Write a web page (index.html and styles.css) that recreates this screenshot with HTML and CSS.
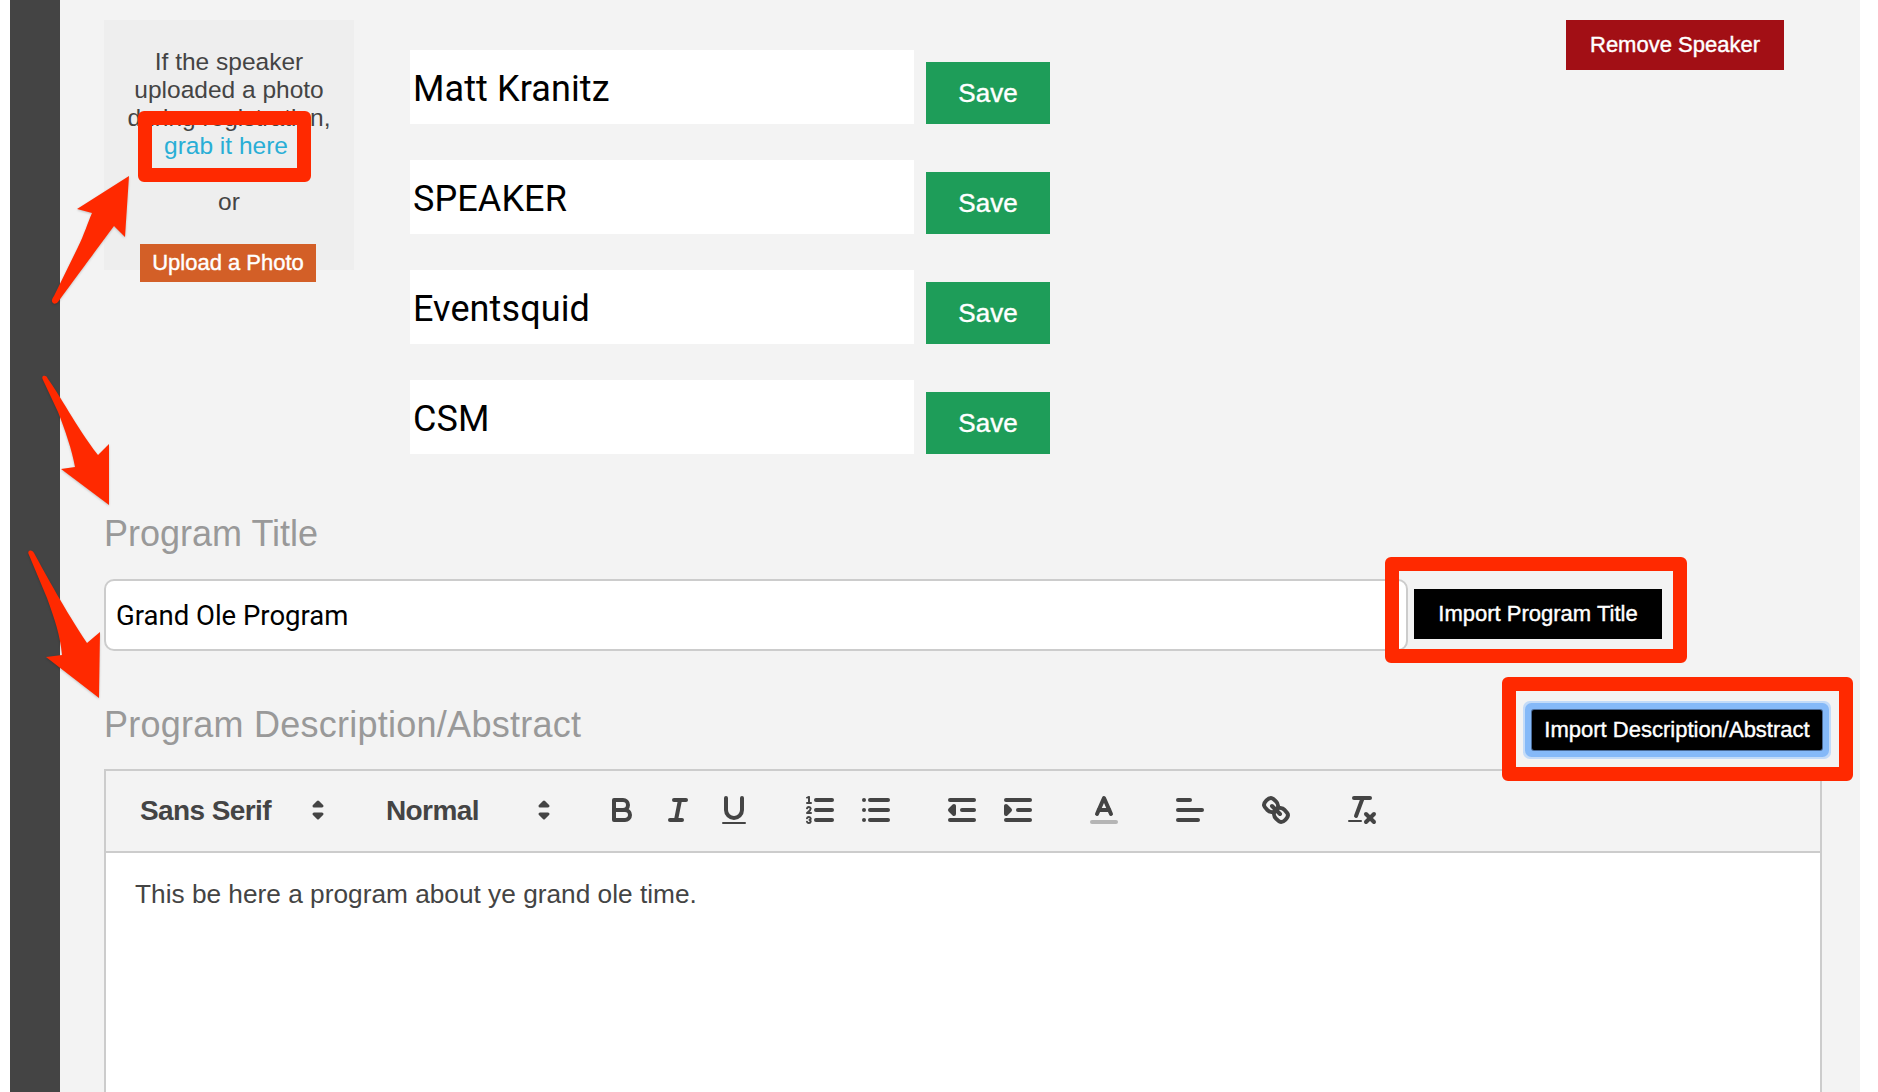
FILE: index.html
```html
<!DOCTYPE html>
<html lang="en">
<head>
<meta charset="utf-8">
<title>Edit Speaker</title>
<link rel="stylesheet" href="styles.css">
</head>
<body>
<div class="shell">
  <aside class="sidebar"></aside>
  <main class="main">
    <section class="speaker">
      <div class="photo-box">
        <p class="photo-text">If the speaker uploaded a photo during registration, <a class="grab" href="#">grab it here</a></p>
        <p class="photo-or">or</p>
        <button class="btn btn-upload">Upload a Photo</button>
      </div>
      <div class="fields">
        <div class="field-row"><div class="field">Matt Kranitz</div><button class="btn btn-save">Save</button></div>
        <div class="field-row"><div class="field">SPEAKER</div><button class="btn btn-save">Save</button></div>
        <div class="field-row"><div class="field">Eventsquid</div><button class="btn btn-save">Save</button></div>
        <div class="field-row"><div class="field">CSM</div><button class="btn btn-save">Save</button></div>
      </div>
      <button class="btn btn-remove">Remove Speaker</button>
    </section>

    <h2 class="label label-title">Program Title</h2>
    <div class="title-row">
      <div class="title-input">Grand Ole Program</div>
      <button class="btn btn-import">Import Program Title</button>
    </div>

    <div class="desc-row">
      <h2 class="label label-desc">Program Description/Abstract</h2>
      <button class="btn btn-import-desc">Import Description/Abstract</button>
    </div>

    <div class="editor">
      <div class="toolbar">
        <span class="picker picker-font">Sans Serif
          <svg class="ic-arrow" viewBox="0 0 18 18"><polygon points="7 11 9 13 11 11 7 11"/><polygon points="7 7 9 5 11 7 7 7"/></svg>
        </span>
        <span class="picker picker-size">Normal
          <svg class="ic-arrow" viewBox="0 0 18 18"><polygon points="7 11 9 13 11 11 7 11"/><polygon points="7 7 9 5 11 7 7 7"/></svg>
        </span>
        <span class="group">
          <span class="tool"><svg viewBox="0 0 18 18"><path d="M5,4H9.5A2.5,2.5,0,0,1,12,6.5v0A2.5,2.5,0,0,1,9.5,9H5A0,0,0,0,1,5,9V4A0,0,0,0,1,5,4Z"/><path d="M5,9h5.5A2.5,2.5,0,0,1,13,11.5v0A2.5,2.5,0,0,1,10.5,14H5a0,0,0,0,1,0,0V9A0,0,0,0,1,5,9Z"/></svg></span>
          <span class="tool"><svg viewBox="0 0 18 18"><line x1="7" x2="13" y1="4" y2="4"/><line x1="5" x2="11" y1="14" y2="14"/><line x1="8" x2="10" y1="14" y2="4"/></svg></span>
          <span class="tool"><svg viewBox="0 0 18 18"><path d="M5,3V9a4.012,4.012,0,0,0,4,4H9a4.012,4.012,0,0,0,4-4V3"/><rect class="fill" height="1" rx=".5" ry=".5" width="12" x="3" y="15"/></svg></span>
        </span>
        <span class="group">
          <span class="tool"><svg viewBox="0 0 18 18"><line x1="7" x2="15" y1="4" y2="4"/><line x1="7" x2="15" y1="9" y2="9"/><line x1="7" x2="15" y1="14" y2="14"/><line class="thin" x1="2.5" x2="4.5" y1="5.5" y2="5.5"/><path class="fill" d="M3.5,6A0.5,0.5,0,0,1,3,5.5V3.085l-0.276.138A0.5,0.5,0,0,1,2.053,3c-0.124-.247-0.023-0.324.224-0.447l1-.5A0.5,0.5,0,0,1,4,2.5v3A0.5,0.5,0,0,1,3.5,6Z"/><path class="thin" d="M4.5,10.5h-2c0-.234,1.85-1.076,1.85-2.234A0.959,0.959,0,0,0,2.5,8.156"/><path class="thin" d="M2.5,14.846a0.959,0.959,0,0,0,1.85-.109A0.7,0.7,0,0,0,3.75,14a0.688,0.688,0,0,0,.6-0.736,0.959,0.959,0,0,0-1.85-.109"/></svg></span>
          <span class="tool"><svg viewBox="0 0 18 18"><line x1="6" x2="15" y1="4" y2="4"/><line x1="6" x2="15" y1="9" y2="9"/><line x1="6" x2="15" y1="14" y2="14"/><line x1="3" x2="3" y1="4" y2="4"/><line x1="3" x2="3" y1="9" y2="9"/><line x1="3" x2="3" y1="14" y2="14"/></svg></span>
        </span>
        <span class="group">
          <span class="tool"><svg viewBox="0 0 18 18"><line x1="3" x2="15" y1="14" y2="14"/><line x1="3" x2="15" y1="4" y2="4"/><line x1="9" x2="15" y1="9" y2="9"/><polygon class="fill" points="5 7 5 11 3 9 5 7"/></svg></span>
          <span class="tool"><svg viewBox="0 0 18 18"><line x1="3" x2="15" y1="14" y2="14"/><line x1="3" x2="15" y1="4" y2="4"/><line x1="9" x2="15" y1="9" y2="9"/><polygon class="fill" points="3 7 3 11 5 9 3 7"/></svg></span>
        </span>
        <span class="group">
          <span class="tool"><svg viewBox="0 0 18 18"><line class="label-line" x1="3" x2="15" y1="15" y2="15"/><polyline points="5.5 11 9 3 12.5 11"/><line x1="11.63" x2="6.38" y1="9" y2="9"/></svg></span>
        </span>
        <span class="group">
          <span class="tool"><svg viewBox="0 0 18 18"><line x1="3" x2="15" y1="9" y2="9"/><line x1="3" x2="13" y1="14" y2="14"/><line x1="3" x2="9" y1="4" y2="4"/></svg></span>
        </span>
        <span class="group">
          <span class="tool"><svg viewBox="0 0 18 18"><line x1="7" x2="11" y1="7" y2="11"/><path d="M8.9,4.577a3.476,3.476,0,0,1,.36,4.679A3.476,3.476,0,0,1,4.577,8.9C3.185,7.5,2.035,6.4,4.217,4.217S7.5,3.185,8.9,4.577Z"/><path d="M13.423,9.1a3.476,3.476,0,0,0-4.679-.36,3.476,3.476,0,0,0,.36,4.679c1.392,1.392,2.5,2.542,4.679.36S14.815,10.5,13.423,9.1Z"/></svg></span>
        </span>
        <span class="group">
          <span class="tool"><svg viewBox="0 0 18 18"><line x1="5" x2="13" y1="3" y2="3"/><line x1="6" x2="9.35" y1="12" y2="3"/><line x1="11" x2="15" y1="11" y2="15"/><line x1="15" x2="11" y1="11" y2="15"/><rect class="fill" height="1" rx=".5" ry=".5" width="7" x="2" y="14"/></svg></span>
        </span>
      </div>
      <div class="editor-body">This be here a program about ye grand ole time.</div>
    </div>
  </main>
</div>

<div class="mark mark-grab"></div>
<div class="mark mark-title"></div>
<div class="mark mark-desc"></div>
<svg class="arrows" viewBox="0 0 1878 1092">
  <path d="M53 303 C51 301 52 299 54 296 L78 247 C84 235 88 222 92 213 L77 209 L129 176 L125 237 L114 226 C100 245 80 272 58 302 C56 304 54 304 53 303Z"/>
  <path d="M43 376 C45 375 47 376 48 379 C60 395 75 425 98 455 L109 444 L109 505 L61 469 L75 467 C72 450 65 430 58 412 L43 380 C42 378 42 377 43 376Z"/>
  <path d="M29 551 C31 550 33 551 34 553 C46 575 65 610 87 643 L100 632 L99 698 L46 657 L62 655 C60 635 55 620 47 598 L29 555 C28 553 28 552 29 551Z"/>
</svg>
</body>
</html>
```
FILE: styles.css
```css
* { box-sizing: border-box; }
html, body { margin: 0; padding: 0; background: #fff; }
body { width: 1878px; height: 1092px; overflow: hidden; position: relative; font-family: "Liberation Sans", Arial, sans-serif; color: #444; }

.shell { display: flex; height: 1092px; padding: 0 18px 0 10px; }
.sidebar { width: 50px; flex: none; background: #444; }
.main { width: 1800px; flex: none; background: #f3f3f3; padding: 20px 0 0 44px; overflow: hidden; }

.btn { border: 0; border-radius: 0; margin: 0; padding: 0; color: #fff; font-family: "Liberation Sans", Arial, sans-serif; font-size: 22px; -webkit-text-stroke: .4px #fff; display: block; }

.speaker { display: flex; align-items: flex-start; height: 493px; }
.photo-box { width: 250px; height: 250px; flex: none; background: #eee; padding: 28px 16px 0; text-align: center; font-size: 24.5px; line-height: 28px; color: #444; }
.photo-text { margin: 0; }
.grab { color: #29aed6; text-decoration: none; margin-right: 6px; }
.photo-or { margin: 28px 0 0; }
.btn-upload { width: 176px; height: 38px; margin: 28px 0 0 20px; background: #d35f27; }

.fields { width: 640px; margin: 30px 0 0 56px; flex: none; }
.field-row { display: flex; align-items: flex-end; gap: 12px; margin-bottom: 36px; }
.field { width: 504px; height: 74px; background: #fff; padding: 0 3px; font-family: Roboto, sans-serif; font-size: 36px; letter-spacing: .1px; line-height: 78px; color: #000; }
.btn-save { width: 124px; height: 62px; background: #1e9d59; font-size: 26px; }
.btn-remove { width: 218px; height: 50px; margin-left: 516px; background: #a20f15; }

.label { margin: 0; font-size: 36px; line-height: 42px; font-weight: 400; color: #999; }
.label-desc { letter-spacing: .25px; margin-top: -1px; }

.title-row { display: flex; align-items: center; gap: 6px; margin-top: 24px; }
.title-input { width: 1304px; height: 72px; border: 2px solid #ccc; border-radius: 10px; background: #fff; padding: 0 10px; font-family: Roboto, sans-serif; font-size: 27.5px; line-height: 70px; color: #000; }
.btn-import { width: 248px; height: 50px; margin-top: -2px; background: #000; }

.desc-row { display: flex; justify-content: space-between; align-items: flex-start; width: 1718px; height: 118px; padding-top: 54px; }
.btn-import-desc { width: 290px; height: 40px; margin-top: 5px; background: #000; box-shadow: 0 0 0 1px #4a6a96, 0 0 0 7px #85b9f8, 0 0 0 9px #c3dbf8; border-radius: 2px; }

.editor { width: 1718px; height: 400px; border: 2px solid #ccc; background: #fff; }
.toolbar { display: flex; align-items: center; height: 82px; padding: 0 16px 2px; background: #f3f3f3; border-bottom: 2px solid #ccc; }
.picker { position: relative; display: block; height: 48px; padding-left: 18px; margin-right: 30px; font-size: 28px; font-weight: 700; line-height: 50px; letter-spacing: -.6px; color: #444; }
.picker-font { width: 216px; }
.picker-size { width: 196px; }
.ic-arrow { position: absolute; right: 2px; top: 6px; width: 36px; height: 36px; fill: #444; stroke: #444; stroke-width: 1.5; stroke-linejoin: round; }

.group { display: flex; margin-right: 30px; }
.tool { display: block; width: 56px; height: 48px; padding: 6px 10px; }
.tool svg { display: block; width: 36px; height: 36px; fill: none; stroke: #444; stroke-width: 2; stroke-linecap: round; stroke-linejoin: round; }
.tool .fill { fill: #444; stroke: none; }
.tool polygon.fill { stroke: #444; }
.tool .thin { stroke-width: 1; fill: none; }
.tool .label-line { stroke: #b5b5b5; }

.editor-body { padding: 20px 29px; font-size: 26.25px; line-height: 42px; color: #444; }

.mark { position: absolute; border: 14px solid #ff2900; border-radius: 6px; }
.mark-grab { left: 138px; top: 111px; width: 173px; height: 71px; }
.mark-title { left: 1385px; top: 557px; width: 302px; height: 106px; }
.mark-desc { left: 1502px; top: 677px; width: 351px; height: 104px; }
.arrows { position: absolute; left: 0; top: 0; width: 1878px; height: 1092px; fill: #ff2900; filter: drop-shadow(0 1px 1px rgba(0,0,0,.2)); pointer-events: none; }
```
